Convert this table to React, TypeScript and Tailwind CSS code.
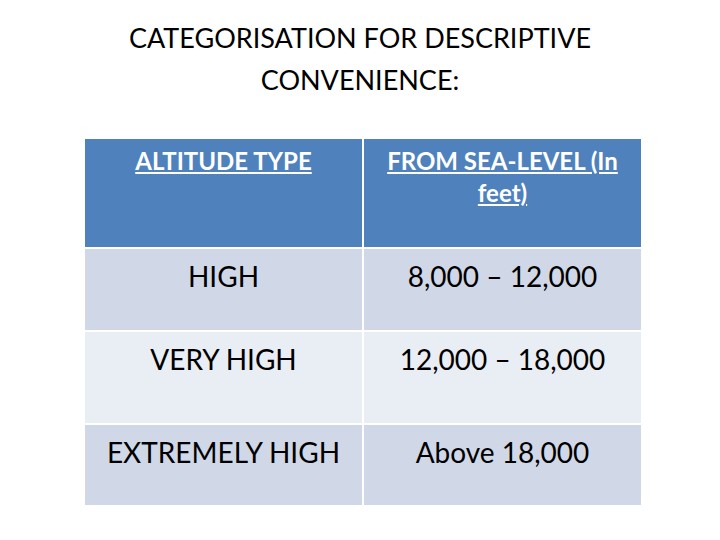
import React from 'react';

const rows = [
  { type: 'HIGH', range: '8,000 – 12,000', bg: 'bg-[#d0d8e8]', h: 'h-[81px]' },
  { type: 'VERY HIGH', range: '12,000 – 18,000', bg: 'bg-[#e9edf4]', h: 'h-[91px]' },
  { type: 'EXTREMELY HIGH', range: 'Above 18,000', bg: 'bg-[#d0d8e8]', h: 'h-[80px]' },
];

const App: React.FC = () => {
  return (
    <div className="w-[720px] h-[540px] bg-white font-['Lato','Open_Sans',sans-serif] text-black overflow-hidden">
      {/* title */}
      <h1 className="pt-[17px] text-center text-[27px] leading-[42px] font-normal">
        CATEGORISATION FOR DESCRIPTIVE
        <br />
        CONVENIENCE:
      </h1>

      {/* table */}
      <div className="ml-[85px] mt-[38px] w-[556px] grid grid-cols-[277px_277px] gap-[2px]">
        <div className="h-[108px] bg-[#4f81bd] text-white font-bold text-[24px] leading-[32px] text-center pt-[6px] px-2">
          <span className="underline underline-offset-2">ALTITUDE TYPE</span>
        </div>
        <div className="h-[108px] bg-[#4f81bd] text-white font-bold text-[24px] leading-[32px] text-center pt-[6px] px-2">
          <span className="underline underline-offset-2">FROM SEA-LEVEL (In feet)</span>
        </div>
        {rows.map(r => (
          <React.Fragment key={r.type}>
            <div className={`${r.h} ${r.bg} text-center text-[28px] leading-[40px] pt-[7px]`}>{r.type}</div>
            <div className={`${r.h} ${r.bg} text-center text-[28px] leading-[40px] pt-[7px]`}>{r.range}</div>
          </React.Fragment>
        ))}
      </div>
    </div>
  );
};

export default App;
